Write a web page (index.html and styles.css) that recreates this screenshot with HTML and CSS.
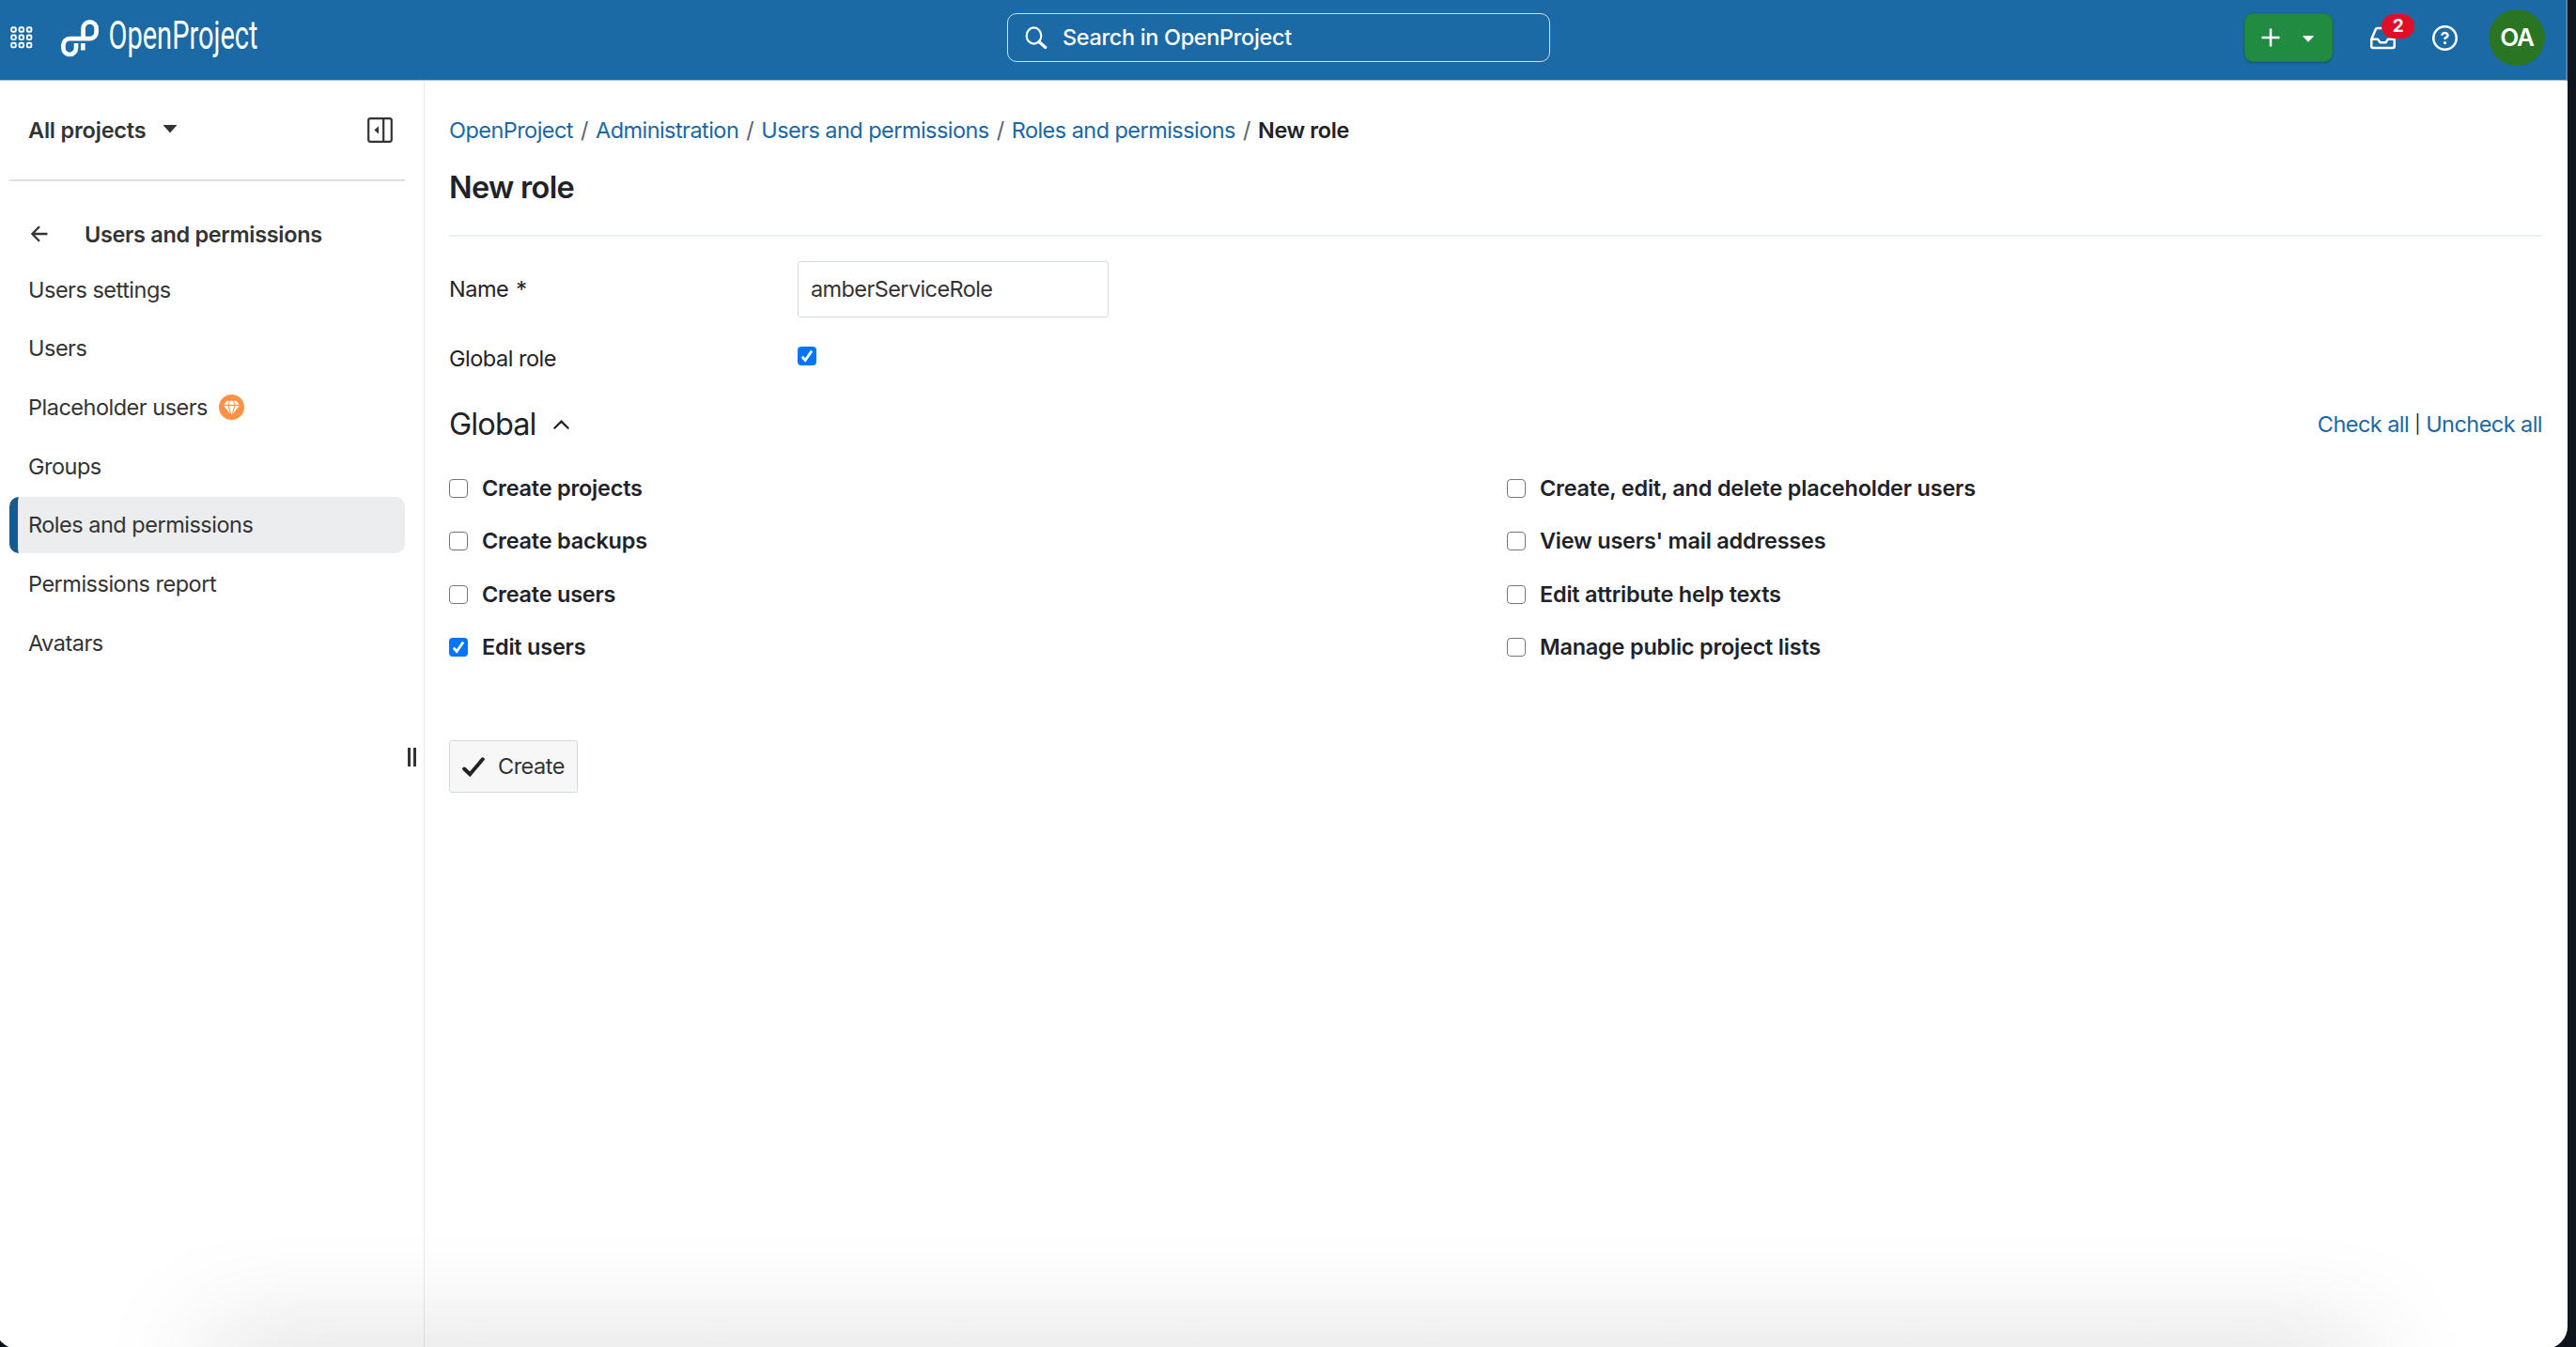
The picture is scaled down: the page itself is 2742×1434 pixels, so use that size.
FILE: index.html
```html
<!DOCTYPE html>
<html lang="en">
<head>
  <meta charset="utf-8">
  <title>New role | OpenProject</title>
  <link rel="stylesheet" href="styles.css">
</head>
<body>
  <div class="window">
    <header class="top-bar">
      <div class="top-left">
        <svg class="waffle" viewBox="0 0 24 24">
          <g fill="none" stroke="#fff" stroke-width="1.9">
            <rect x="1.2" y="1.2" width="4.6" height="4.6" rx="1.4"/>
            <rect x="9.5" y="1.2" width="4.6" height="4.6" rx="1.4"/>
            <rect x="17.8" y="1.2" width="4.6" height="4.6" rx="1.4"/>
            <rect x="1.2" y="9.5" width="4.6" height="4.6" rx="1.4"/>
            <rect x="9.5" y="9.5" width="4.6" height="4.6" rx="1.4"/>
            <rect x="17.8" y="9.5" width="4.6" height="4.6" rx="1.4"/>
            <rect x="1.2" y="17.8" width="4.6" height="4.6" rx="1.4"/>
            <rect x="9.5" y="17.8" width="4.6" height="4.6" rx="1.4"/>
            <rect x="17.8" y="17.8" width="4.6" height="4.6" rx="1.4"/>
          </g>
        </svg>
        <svg class="logo" viewBox="0 0 212 50">
          <path d="M16 25v5.200a6.800 6.800 0 0 1-6.800 6.800a6.800 6.800 0 0 1-6.800-6.800V27a6.800 6.800 0 0 1 6.800-6.800h21.400a7 7 0 0 0 7-7V9.300a7 7 0 0 0-14 0v10.900M23.300 25v7.500" fill="none" stroke="#fff" stroke-width="4.700"/>
          <text class="logo-text" x="50.500" y="31" textLength="159" lengthAdjust="spacingAndGlyphs">OpenProject</text>
        </svg>
      </div>

      <div class="search">
        <svg class="search-icon" viewBox="0 0 24 24" fill="none" stroke="#fff">
          <ellipse cx="9.500" cy="10" rx="7.800" ry="8.600" stroke-width="2.200"/>
          <path d="M15 16.500l6.800 6" stroke-width="3.200" stroke-linecap="round"/>
        </svg>
        <span>Search in OpenProject</span>
      </div>

      <div class="top-right">
        <div class="add-button">
          <svg class="plus" viewBox="0 0 20 20"><path d="M10 .5v19M.5 10h19" stroke="#fff" stroke-width="2.500"/></svg>
          <svg class="add-caret" viewBox="0 0 12 7"><path d="M.8 0h10.400q.8.300.3.900L6.500 6.300q-.5.500-1 0L.5.900Q0 .3.800 0z" fill="#fff"/></svg>
        </div>
        <div class="inbox">
          <svg viewBox="0 0 16 16" width="27" height="27"><path fill="#fff" d="M2.800 2.060A1.750 1.750 0 0 1 4.410 1h7.180c.7 0 1.333.417 1.610 1.060l2.740 6.395c.04.093.06.194.06.295v4.500A1.750 1.750 0 0 1 14.250 15H1.750A1.750 1.750 0 0 1 0 13.250v-4.500c0-.101.020-.202.060-.295Zm1.610.44a.25.25 0 0 0-.230.152L1.887 8H4.750a.75.75 0 0 1 .6.300L6.625 10h2.750l1.275-1.700a.75.75 0 0 1 .6-.3h2.863L11.820 2.652a.25.25 0 0 0-.230-.152Zm10.090 7h-2.875l-1.275 1.700a.75.75 0 0 1-.6.300h-3.500a.75.75 0 0 1-.6-.3L4.375 9.500H1.500v3.750c0 .138.112.25.25.25h12.500a.25.25 0 0 0 .25-.25Z"/></svg>
          <span class="badge">2</span>
        </div>
        <svg class="help" viewBox="0 0 16 16"><path fill="#fff" d="M0 8a8 8 0 1 1 16 0A8 8 0 0 1 0 8Zm8-6.500a6.500 6.500 0 1 0 0 13 6.500 6.500 0 0 0 0-13ZM6.920 6.085h.001a.749.749 0 1 1-1.342-.67c.169-.339.436-.701.849-.977C6.845 4.160 7.369 4 8 4a2.756 2.756 0 0 1 1.637.525c.503.377.863.965.863 1.725 0 .448-.115.830-.329 1.150-.205.307-.470.513-.692.662-.109.072-.220.138-.313.195l-.006.004a6.240 6.240 0 0 0-.260.160.952.952 0 0 0-.276.245.75.75 0 0 1-1.248-.832c.184-.264.420-.489.692-.661.103-.067.207-.132.313-.195l.007-.004c.100-.061.182-.110.258-.161a.969.969 0 0 0 .277-.245C8.960 6.514 9 6.427 9 6.250a.612.612 0 0 0-.262-.525A1.270 1.270 0 0 0 8 5.500c-.369 0-.595.090-.740.187a1.010 1.010 0 0 0-.340.398ZM9 11a1 1 0 1 1-2 0 1 1 0 0 1 2 0Z"/></svg>
        <div class="avatar">OA</div>
      </div>
    </header>

    <div class="layout">
      <nav class="sidebar">
        <div class="project-select">
          <span>All projects</span>
          <svg class="project-caret" viewBox="0 0 16 9"><path d="M.5 0h15L8 8.500z" fill="#333"/></svg>
          <svg class="collapse" viewBox="0 0 27 27">
            <rect x="1.200" y="1.200" width="24.600" height="24.600" rx="2" fill="none" stroke="#333" stroke-width="2.200"/>
            <path d="M17.200 1v25" stroke="#333" stroke-width="2.200"/>
            <path d="M12 9.200v8.400L7.400 13.400z" fill="#333"/>
          </svg>
        </div>
        <div class="menu-title">
          <svg class="back" viewBox="0 0 18 18"><path d="M17.500 9H1.500M9 1.300L1.300 9 9 16.700" fill="none" stroke="#333" stroke-width="2.300"/></svg>
          <span>Users and permissions</span>
        </div>
        <ul class="menu">
          <li>Users settings</li>
          <li>Users</li>
          <li>Placeholder users
            <svg class="diamond" viewBox="0 0 27 27">
              <circle cx="13.500" cy="13.500" r="13.500" fill="#fd9146"/>
              <path d="M8.400 6.800h2.700l-1.500 4H5.300zM12 6.800h3l1.500 4h-6zM15.900 6.800h2.700l3.100 4h-4.300zM5.300 11.900h4.200l2.800 9zM10.600 11.900h5.800l-2.900 9.800zM17.500 11.900h4.200l-7 9z" fill="#fff"/>
            </svg>
          </li>
          <li>Groups</li>
          <li class="active">Roles and permissions</li>
          <li>Permissions report</li>
          <li>Avatars</li>
        </ul>
        <div class="resizer"></div>
      </nav>

      <main class="content">
        <div class="breadcrumb">
          <a>OpenProject</a><i>/</i><a>Administration</a><i>/</i><a>Users and permissions</a><i>/</i><a>Roles and permissions</a><i>/</i><b>New role</b>
        </div>
        <h1>New role</h1>

        <div class="form-row name-row">
          <label class="form-label">Name <span class="required">*</span></label>
          <input class="text-field" type="text" value="amberServiceRole">
        </div>
        <div class="form-row global-row">
          <label class="form-label">Global role</label>
          <span class="check checked"><svg viewBox="0 0 20 20"><path d="M4.800 10.800l3.400 3.700 6.900-10"/></svg></span>
        </div>

        <div class="group-header">
          <h2>Global</h2>
          <svg class="chevron" viewBox="0 0 17 10"><path d="M1.300 8.700L8.500 1.600l7.200 7.100" fill="none" stroke="#1f2328" stroke-width="2.200" stroke-linecap="round"/></svg>
          <div class="check-links"><a>Check all</a><i>|</i><a>Uncheck all</a></div>
        </div>

        <div class="permissions">
          <label><span class="check"></span>Create projects</label>
          <label><span class="check"></span>Create backups</label>
          <label><span class="check"></span>Create users</label>
          <label><span class="check checked"><svg viewBox="0 0 20 20"><path d="M4.800 10.800l3.400 3.700 6.900-10"/></svg></span>Edit users</label>
          <label><span class="check"></span>Create, edit, and delete placeholder users</label>
          <label><span class="check"></span>View users' mail addresses</label>
          <label><span class="check"></span>Edit attribute help texts</label>
          <label><span class="check"></span>Manage public project lists</label>
        </div>

        <button class="create">
          <svg class="tick" viewBox="0 0 24 21"><path d="M2.200 12.500l6 5.800L21.800 2.300" fill="none" stroke="#222" stroke-width="4" stroke-linecap="round"/></svg>
          Create
        </button>
      </main>
    </div>
    <div class="dock-shadow"></div>
  </div>
</body>
</html>
```
FILE: styles.css
```css
* {
  box-sizing: border-box;
}

body {
  margin: 0;
  height: 1434px;
  overflow: hidden;
  background: #10141c;
  font-family: Inter, "Liberation Sans", sans-serif;
  font-size: 23.5px;
  line-height: 30px;
  letter-spacing: -.5px;
  color: #1f2328;
}

svg {
  display: block;
  flex: none;
}

a {
  color: #1a67a3;
}

.window {
  position: relative;
  width: 2738px;
  height: 1436px;
  margin-left: -5px;
  padding-left: 5px;
  background: #fff;
  border-radius: 0 0 24px 24px;
  overflow: hidden;
}

/* top bar */

.top-bar {
  display: grid;
  grid-template-columns: 1072px 578px 1fr;
  height: 86px;
  padding-top: 10px;
  background: #1b69a5;
  border-bottom: 1px solid #a3c3dd;
  border-right: 2px solid #4a86b8;
  color: #fff;
}

.top-left {
  display: flex;
  height: 60px;
  align-items: center;
  padding-left: 11px;
}

.waffle {
  width: 24px;
  height: 24px;
}

.logo {
  width: 212px;
  height: 50px;
  margin: 12px 0 0 30px;
  overflow: visible;
}

.logo-text {
  font-family: Roboto, sans-serif;
  font-size: 42px;
  letter-spacing: 0;
  fill: #fff;
}

.search {
  display: flex;
  align-items: center;
  height: 52px;
  margin-top: 4px;
  padding-left: 18px;
  gap: 16px;
  border: 1px solid #d3e1ed;
  border-radius: 10px;
  font-weight: 500;
  letter-spacing: -.350px;
}

.search-icon {
  width: 24px;
  height: 24px;
}

.top-right {
  display: flex;
  align-items: center;
  justify-content: flex-end;
  height: 60px;
  padding-right: 22px;
}

.add-button {
  display: flex;
  align-items: center;
  width: 94px;
  height: 52px;
  padding-left: 17px;
  gap: 24px;
  background: #218b42;
  border: 1px solid #1f7f3c;
  border-radius: 9px;
  box-shadow: 0 1px 2px rgba(0, 0, 0, .25);
}

.plus {
  width: 20px;
  height: 20px;
}

.add-caret {
  width: 12px;
  height: 7px;
  margin-top: 3px;
}

.inbox {
  position: relative;
  margin-left: 40px;
}

.badge {
  position: absolute;
  left: 12px;
  top: -12px;
  width: 35px;
  height: 26px;
  border-radius: 13px;
  background: #e00f28;
  font-size: 19px;
  font-weight: 700;
  line-height: 26px;
  text-align: center;
}

.help {
  width: 27px;
  height: 27px;
  margin-left: 39px;
}

.avatar {
  width: 60px;
  height: 60px;
  margin-left: 33px;
  border-radius: 50%;
  background: #297524;
  font-size: 26px;
  font-weight: 600;
  line-height: 60px;
  letter-spacing: -1.200px;
  text-align: center;
}

/* sidebar */

.layout {
  display: flex;
  height: 1350px;
}

.sidebar {
  position: relative;
  width: 452px;
  padding: 0 20px 0 10px;
  border-right: 1px solid #e6e9ec;
  color: #333;
}

.project-select {
  display: flex;
  align-items: center;
  height: 107px;
  padding: 0 13px 0 20px;
  border-bottom: 2px solid #dce1e8;
  font-weight: 600;
  letter-spacing: -.200px;
}

.project-caret {
  width: 16px;
  height: 9px;
  margin-left: 18px;
  margin-top: -3px;
}

.collapse {
  width: 27px;
  height: 27px;
  margin-left: auto;
}

.menu-title {
  display: flex;
  align-items: center;
  height: 60px;
  margin-top: 26px;
  padding-left: 23px;
  gap: 39px;
  font-weight: 600;
  letter-spacing: -.330px;
}

.menu-title span {
  padding-top: 1px;
}

.back {
  width: 18px;
  height: 18px;
}

.menu {
  display: flex;
  flex-direction: column;
  gap: 2.700px;
  margin: -1px 0 0;
  padding: 0;
  list-style: none;
}

.menu li {
  display: flex;
  align-items: center;
  height: 60px;
  padding: 1px 0 0 20px;
}

.menu .active {
  padding-left: 11px;
  border-left: 9px solid #175a8e;
  border-radius: 10px;
  background: #ebedef;
}

.diamond {
  width: 27px;
  height: 27px;
  margin-left: 12px;
}

.resizer {
  position: absolute;
  left: 434px;
  top: 710px;
  width: 9px;
  height: 20px;
  border: solid #333;
  border-width: 0 3px;
}

/* page content */

.content {
  flex: 1;
  padding: 38px 27px 0 26px;
}

.breadcrumb {
  display: flex;
  letter-spacing: -.550px;
}

.breadcrumb i {
  width: 24px;
  text-align: center;
  font-style: normal;
  color: #59636e;
}

.breadcrumb b {
  font-weight: 600;
  letter-spacing: -.400px;
}

h1 {
  height: 83px;
  margin: 15px 0 0;
  padding-top: 11px;
  border-bottom: 2px solid #eceff2;
  font-size: 32.500px;
  line-height: 40px;
  letter-spacing: -.700px;
  font-weight: 600;
}

.form-row {
  display: flex;
  align-items: center;
}

.form-label {
  width: 371px;
}

.required {
  margin-left: 2px;
}

.name-row {
  height: 60px;
  margin-top: 26px;
}

.global-row {
  height: 30px;
  margin-top: 29px;
}

.global-row .check {
  margin-bottom: 6px;
}

.text-field {
  width: 331px;
  height: 60px;
  padding: 0 13px 1px;
  border: 1px solid #d4dae1;
  border-radius: 3px;
  font: inherit;
  letter-spacing: -.600px;
  color: #333;
}

.group-header {
  display: flex;
  align-items: center;
  height: 40px;
  margin-top: 35px;
}

h2 {
  margin: 0;
  font-size: 32.500px;
  font-weight: 400;
  letter-spacing: -.900px;
}

.chevron {
  width: 17px;
  height: 10px;
  margin-left: 18px;
}

.check-links {
  display: flex;
  margin-left: auto;
  letter-spacing: -.550px;
}

.check-links i {
  width: 18px;
  font-size: 19px;
  font-style: normal;
  text-align: center;
}

.permissions {
  display: grid;
  grid-template-rows: repeat(4, 56.300px);
  grid-template-columns: 1126px 1fr;
  grid-auto-flow: column;
  margin-top: 20px;
  font-weight: 600;
  letter-spacing: -.230px;
}

.permissions label {
  display: flex;
  align-items: center;
  gap: 15px;
}

.check {
  width: 20px;
  height: 20px;
  border: 1.500px solid #767676;
  border-radius: 4px;
  background: #fff;
}

.check.checked {
  border: 0;
  background: #0075ff;
}

.check path {
  fill: none;
  stroke: #fff;
  stroke-width: 2.800;
}

.create {
  display: flex;
  align-items: center;
  width: 137px;
  height: 56px;
  margin-top: 71px;
  padding: 0 0 0 13px;
  gap: 14px;
  background: #f7f7f7;
  border: 1px solid #d4dae3;
  border-radius: 3px;
  font: inherit;
  letter-spacing: inherit;
  color: #333;
}

.tick {
  width: 24px;
  height: 21px;
}

/* soft shade along the lower edge of the window */
.dock-shadow {
  position: absolute;
  left: 225px;
  right: 215px;
  bottom: -40px;
  height: 40px;
  box-shadow: 0 0 115px 0 rgba(0, 0, 0, .25);
}
```
